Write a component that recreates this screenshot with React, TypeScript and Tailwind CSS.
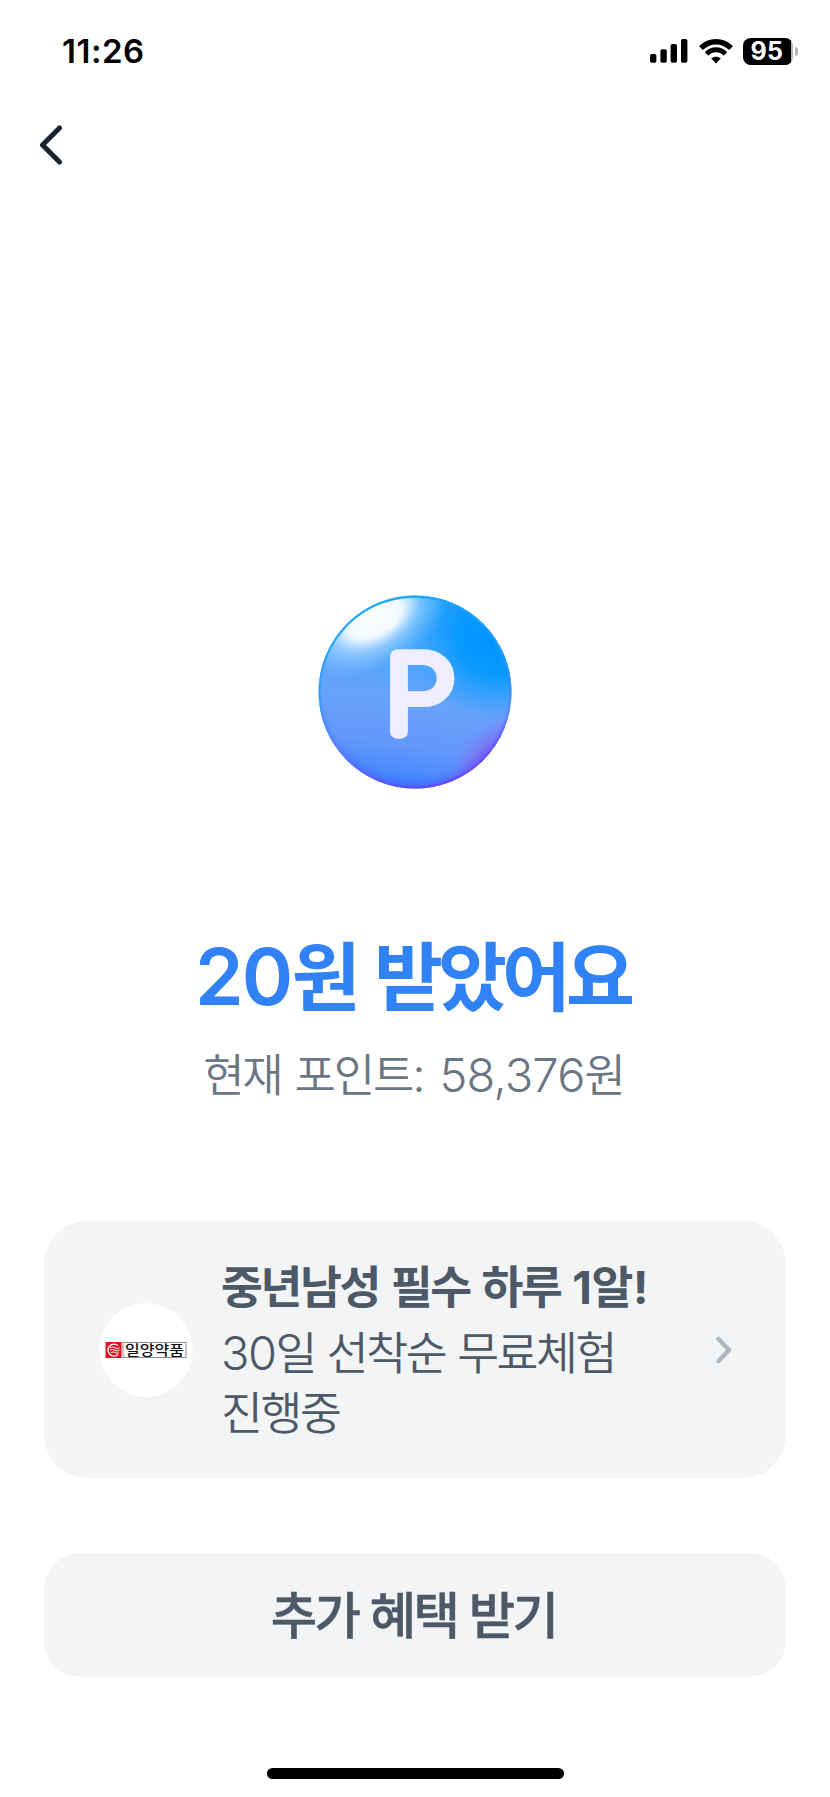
import type { ReactNode } from "react";

function SignalIcon() {
  return (
    <svg width="38" height="24" viewBox="0 0 38 24" fill="currentColor">
      <rect x="0" y="15" width="6.4" height="8.8" rx="1.8" />
      <rect x="10.4" y="10.2" width="6.4" height="13.6" rx="1.8" />
      <rect x="20.6" y="5" width="6.4" height="18.8" rx="1.8" />
      <rect x="31" y="0" width="6.4" height="23.8" rx="1.8" />
    </svg>
  );
}

function WifiIcon() {
  return (
    <svg width="34" height="25" viewBox="0 0 34 25" fill="none" stroke="currentColor">
      <path d="M2 9.2C10.4 .6 23.6 .6 32 9.2" strokeWidth="5.4" />
      <path d="M7.6 14.9C12.9 9.5 21.1 9.5 26.4 14.9" strokeWidth="5" />
      <path d="M17 24.6L12.2 19.6C15 17.2 19 17.2 21.8 19.6Z" fill="currentColor" stroke="none" />
    </svg>
  );
}

function Battery({ level }: { level: number }) {
  return (
    <div className="flex items-center gap-[2px]">
      <div className="flex h-[27px] w-[50px] overflow-hidden rounded-[8px] bg-[#b3b3b3]">
        <div className="flex w-[48px] items-center justify-center bg-black pt-px text-[25px] leading-none font-bold tracking-[0.3px] text-white">
          {level}
        </div>
      </div>
      <div className="h-[9px] w-[3px] rounded-r-full bg-[#b3b3b3]" />
    </div>
  );
}

function StatusBar() {
  return (
    <div className="flex h-[102px] items-center justify-between pr-[32px] pl-[62px] text-black">
      <span className="pt-[2px] text-[33px] font-semibold tracking-[0.5px]">11:26</span>
      <div className="flex items-center">
        <SignalIcon />
        <div className="ml-[11px]">
          <WifiIcon />
        </div>
        <div className="ml-[10px]">
          <Battery level={95} />
        </div>
      </div>
    </div>
  );
}

function PointCoin() {
  return (
    <svg width="194" height="194" viewBox="0 0 194 194">
      <defs>
        <linearGradient id="base" x1="0.6" y1="0" x2="0.45" y2="1">
          <stop offset="0" stopColor="#1a9dff" />
          <stop offset="0.3" stopColor="#47a6fd" />
          <stop offset="0.55" stopColor="#68a2fb" />
          <stop offset="0.78" stopColor="#6498fa" />
          <stop offset="1" stopColor="#3a83ff" />
        </linearGradient>
        <radialGradient id="right" cx="0.92" cy="0.22" r="0.44">
          <stop offset="0" stopColor="#0096ff" />
          <stop offset="0.45" stopColor="#0499ff" stopOpacity="0.9" />
          <stop offset="1" stopColor="#2fa0ff" stopOpacity="0" />
        </radialGradient>
        <radialGradient id="shine">
          <stop offset="0" stopColor="#fff" />
          <stop offset="0.36" stopColor="#fff" stopOpacity="0.92" />
          <stop offset="0.6" stopColor="#e4f2ff" stopOpacity="0.42" />
          <stop offset="1" stopColor="#b8dcff" stopOpacity="0" />
        </radialGradient>
        <radialGradient id="violet">
          <stop offset="0" stopColor="#8452f7" stopOpacity="0.9" />
          <stop offset="0.4" stopColor="#8166f6" stopOpacity="0.65" />
          <stop offset="1" stopColor="#7a84f8" stopOpacity="0" />
        </radialGradient>
        <radialGradient id="edge" cx="0.5" cy="0.44" r="0.57">
          <stop offset="0.86" stopColor="#4a65ff" stopOpacity="0" />
          <stop offset="1" stopColor="#5340ff" stopOpacity="0.65" />
        </radialGradient>
        <linearGradient id="rim" x1="0.3" y1="0" x2="0.6" y2="1">
          <stop offset="0" stopColor="#12a5ff" />
          <stop offset="0.45" stopColor="#2c9dff" stopOpacity="0.7" />
          <stop offset="0.7" stopColor="#5a7cff" stopOpacity="0.4" />
          <stop offset="1" stopColor="#6a3cff" stopOpacity="0.8" />
        </linearGradient>
        <clipPath id="ball">
          <circle cx="97" cy="97" r="96.5" />
        </clipPath>
      </defs>
      <g clipPath="url(#ball)">
        <rect width="194" height="194" fill="url(#base)" />
        <rect width="194" height="194" fill="url(#right)" />
        <ellipse cx="57" cy="22" rx="84" ry="50" fill="url(#shine)" transform="rotate(-31 57 22)" />
        <ellipse cx="170" cy="164" rx="66" ry="30" fill="url(#violet)" transform="rotate(-48 170 164)" />
        <rect width="194" height="194" fill="url(#edge)" />
      </g>
      <circle cx="97" cy="97" r="95.4" fill="none" stroke="url(#rim)" strokeWidth="2.2" />
      <text
        transform="translate(66.6 136.7) scale(1.12 1)"
        fontSize="104"
        fontWeight="100"
        fill="#eeeefc"
        stroke="#eeeefc"
        strokeWidth="13.5"
        strokeLinejoin="round"
      >
        P
      </text>
    </svg>
  );
}

function BrandLogo() {
  return (
    <svg width="94" height="94" viewBox="0 0 94 94" className="shrink-0">
      <circle cx="47" cy="47" r="46.7" fill="#fff" />
      <rect x="6.5" y="39" width="16" height="16" fill="#e3101f" />
      <g fill="none" stroke="#fff">
        <path d="M19 42.6A6 6 0 1 0 19 51.6" strokeWidth="1.3" />
        <path d="M11 44.8q2.5-1.4 5 0t4.5 0M11 47.2q2.5-1.4 5 0t4.5 0M12 49.6q2.2-1.4 4.5 0t3.5 0" strokeWidth="1" />
      </g>
      <rect x="24" y="39.5" width="63" height="15" fill="#fff" stroke="#8b8b8b" strokeWidth="1" />
      <text
        x="26"
        y="51.7"
        fontSize="13.5"
        fontWeight="500"
        textLength="59"
        lengthAdjust="spacingAndGlyphs"
        fill="#111"
      >
        일양약품
      </text>
    </svg>
  );
}

function Panel({ className, children }: { className: string; children: ReactNode }) {
  return (
    <button className={`flex w-full items-center bg-[#f2f4f6] text-[#4e5968] ${className}`}>
      {children}
    </button>
  );
}

export default function App() {
  return (
    <div className="flex h-[1797px] w-[830px] flex-col bg-white font-['Inter','Noto_Sans_CJK_KR',sans-serif]">
      <StatusBar />

      <div className="flex h-[86px] items-center pl-[37px]">
        <svg width="26" height="42" viewBox="0 0 26 42" fill="none" stroke="#1a222d" strokeWidth="5" strokeLinecap="round" strokeLinejoin="round">
          <path d="M22.5 4L5.5 21L22.5 38" />
        </svg>
      </div>

      {/* Reward result */}
      <main className="flex flex-col items-center pt-[407px]">
        <PointCoin />
        <h1 className="mt-[138px] h-[100px] pr-[5px] text-[75px] leading-[100px] font-semibold tracking-[-5px] [word-spacing:4.5px] whitespace-nowrap text-[#3182f6]">
          <span className="text-[78px] tracking-[-1.7px]">20</span>원 받았어요
        </h1>
        <p className="mt-[18px] h-[60px] pr-[3px] text-[45px] leading-[60px] font-[350] tracking-[-2.2px] [word-spacing:2.5px] whitespace-nowrap text-[#6b7684]">
          현재 포인트<span className="text-[47px] tracking-[-0.8px]">: 58,376</span>원
        </p>
      </main>

      <section className="mt-[116px] flex flex-col gap-[75px] px-[44px]">
        <Panel className="h-[257px] rounded-[43px] pr-[52px] pl-[55px] text-left">
          <BrandLogo />
          <div className="ml-[28px] flex-1 pt-[3px] text-[45.5px] leading-[60px] tracking-[-2.4px] whitespace-nowrap">
            <p className="mb-[5px] font-bold [word-spacing:3.5px]">
              중년남성 필수 하루 <span className="tracking-[-0.4px]">1알!</span>
            </p>
            <p className="font-[350] [word-spacing:1.5px]">
              <span className="text-[47px] tracking-[-1.5px]">30</span>일 선착순 무료체험
              <br />
              진행중
            </p>
          </div>
          <svg width="20" height="30" viewBox="0 0 20 30" fill="none" stroke="#b0b8c1" strokeWidth="4.5" strokeLinecap="round" strokeLinejoin="round">
            <path d="M4.5 4L15 15L4.5 26" />
          </svg>
        </Panel>

        <Panel className="h-[124px] justify-center rounded-[36px] pt-[2px] pr-[3px] text-[50.5px] font-medium tracking-[-2.8px] [word-spacing:1px] [-webkit-text-stroke:0.5px_#4e5968]">
          추가 혜택 받기
        </Panel>
      </section>

      <div className="mx-auto mt-[91px] h-[11px] w-[297px] rounded-full bg-black" />
    </div>
  );
}
